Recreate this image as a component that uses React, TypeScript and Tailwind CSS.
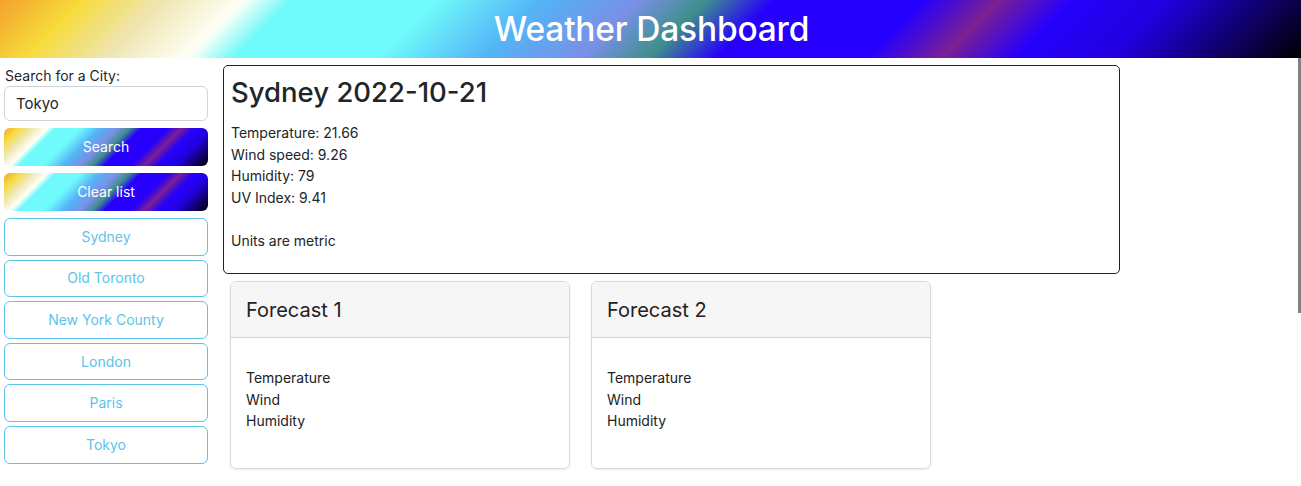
import React from 'react';

const cities = ['Sydney', 'Old Toronto', 'New York County', 'London', 'Paris', 'Tokyo'];

const rainbow =
    'bg-[linear-gradient(135deg,#f2a22e_0%,#f7da3a_6%,#eee6b2_12%,#fffff6_18%,#6ffafb_21.5%,#6ffafb_32%,#54b3f6_40%,#7a8fe6_47%,#3e8f8c_52%,#2600fc_57%,#2600fc_68%,#7b2092_73.5%,#2600fc_79%,#2200e0_86%,#000000_100%)]';

const Forecast: React.FC<{ n: number }> = ({ n }) => (
    <div className="w-[340px] h-[188px] rounded-[6px] border border-[#d9d9d9] shadow-[0_1px_3px_rgba(0,0,0,0.08)] overflow-hidden">
        <div className="h-[56px] bg-[#f6f6f6] border-b border-[#d4d4d4] px-[15px] flex items-center text-[20px] text-[#222]">
            Forecast {n}
        </div>
        <div className="px-[15px] pt-[29px] text-sm leading-[21.5px] text-[#222]">
            <p>Temperature</p>
            <p>Wind</p>
            <p>Humidity</p>
        </div>
    </div>
);

export default function App() {
    return (
        <div className="relative min-h-[486px] bg-white font-['Inter',sans-serif] text-[#212529]">
            <header className={`h-[58px] ${rainbow} flex items-center justify-center`}>
                <h1 className="text-[33.5px] font-medium text-white tracking-[-0.2px] ml-[2px]">Weather Dashboard</h1>
            </header>

            <div className="flex">
                <aside className="w-[204px] ml-[4px] pt-[9px] flex flex-col">
                    <label className="text-sm leading-[18px] ml-[1px]">Search for a City:</label>
                    <input
                        defaultValue="Tokyo"
                        className="mt-[1px] h-[35px] rounded-[6px] border border-[#ced4da] px-[11px] text-[15px] text-[#212529]"
                    />
                    <button className={`mt-[7px] h-[38px] rounded-[6px] ${rainbow} text-white text-sm`}>Search</button>
                    <button className={`mt-[7px] h-[38px] rounded-[6px] ${rainbow} text-white text-sm`}>Clear list</button>
                    <div className="mt-[7px] flex flex-col gap-[4px]">
                        {cities.map((c) => (
                            <button
                                key={c}
                                className="h-[37.6px] rounded-[6px] border border-[#5cc3ea] text-[#5cc3ea] text-sm"
                            >
                                {c}
                            </button>
                        ))}
                    </div>
                </aside>

                <main className="ml-[15px] pt-[7px]">
                    <section className="w-[897px] h-[209px] rounded-[5px] border border-[#222] px-[7px] pt-[8px]">
                        <h2 className="text-[27.5px] font-medium leading-[36px] text-[#212529]">Sydney 2022-10-21</h2>
                        <div className="mt-[12px] text-sm leading-[21.6px]">
                            <p>Temperature: 21.66</p>
                            <p>Wind speed: 9.26</p>
                            <p>Humidity: 79</p>
                            <p>UV Index: 9.41</p>
                            <p>&nbsp;</p>
                            <p>Units are metric</p>
                        </div>
                    </section>

                    <div className="mt-[7px] ml-[7px] flex gap-[21px]">
                        <Forecast n={1} />
                        <Forecast n={2} />
                    </div>
                </main>
            </div>

            <div className="absolute right-0 top-[58px] w-[3px] h-[255px] bg-[#808080]" />
        </div>
    );
}
